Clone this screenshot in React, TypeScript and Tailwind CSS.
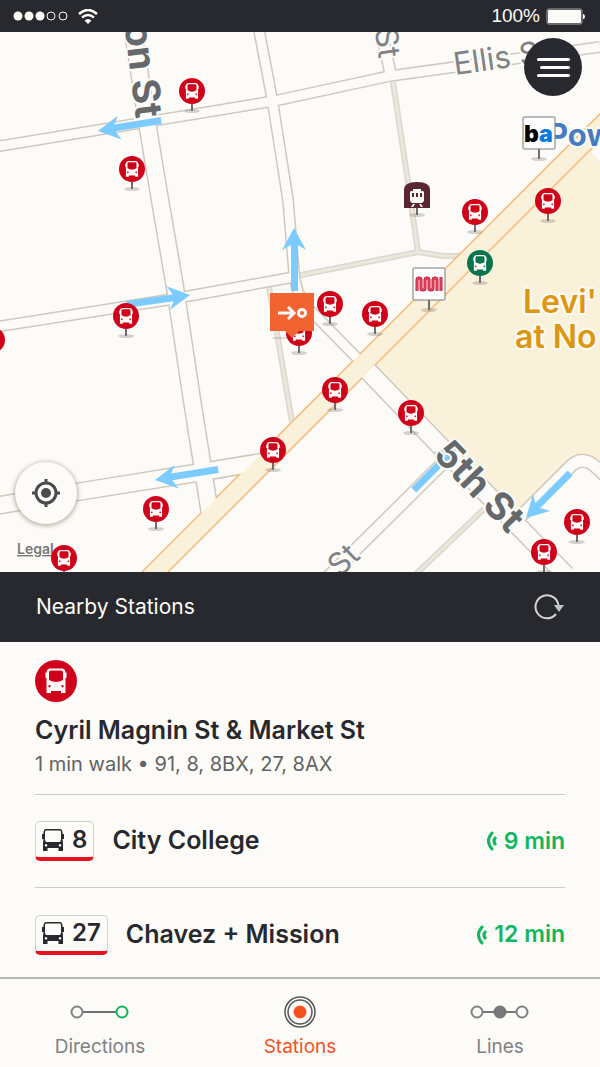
import type { ReactNode } from "react";

type Point = [number, number];

const roads = [
  { d: "M-5 147L0 146L274 101L390 76L600 47", width: 9 },
  { d: "M258 25L272 98L288 200L294 272Q296 295 308 308L357 358", width: 9 },
  { d: "M132 25L148 128L160 200L175 287L192 400L202 463L211 520", width: 16 },
  { d: "M-5 327L167 300L294 277", width: 9 },
  { d: "M380 25L391 76", width: 10 },
  { d: "M-5 506L77 492L202 472L268 461", width: 16 },
  { d: "M368 371L442 448L566 575", width: 17 },
  { d: "M444 462L325 580", width: 11 },
  { d: "M518 519L572 465Q584 455 598 469L612 482", width: 11 },
];

const alleys = [
  "M393 82L408 182L418 252",
  "M296 276L418 252L443 256L462 256",
  "M269 287L277 333L292 422",
  "M484 509L415 575",
];

const marketStreet = "M127 600L640 87";
const muniWorm =
  "M-12 7V-4q0-2 2-2t2 2V4q0 2 2 2t2-2V-4q0-2 2-2t2 2V4q0 2 2 2t2-2V-4q0-2 2-2t2 2V7M12 -7V7";

const arrows: { tip: Point; angle: number; length: number }[] = [
  { tip: [98, 131], angle: -9, length: 64 },
  { tip: [190, 295], angle: 172, length: 64 },
  { tip: [294, 228], angle: 90, length: 63 },
  { tip: [155, 480], angle: -9, length: 64 },
  { tip: [458, 445], angle: 135, length: 63 },
  { tip: [526, 518], angle: -45, length: 63 },
];

const busStops: { at: Point; color?: string }[] = [
  { at: [192, 91] },
  { at: [132, 169] },
  { at: [126, 316] },
  { at: [-8, 340] },
  { at: [475, 212] },
  { at: [548, 201] },
  { at: [480, 263], color: "#08754f" },
  { at: [330, 304] },
  { at: [375, 314] },
  { at: [299, 333] },
  { at: [335, 390] },
  { at: [411, 413] },
  { at: [273, 450] },
  { at: [156, 509] },
  { at: [64, 558] },
  { at: [577, 522] },
  { at: [544, 552] },
];

const departures = [
  { line: "8", destination: "City College", minutes: 9 },
  { line: "27", destination: "Chavez + Mission", minutes: 12 },
];

// Front of a bus, centred on 0,0 and about 21 units wide
function BusShape() {
  return (
    <path
      fillRule="evenodd"
      d="M-5 -12.5H5Q9.500 -12.5 9.500 -8.500H10.500V-3H9.500V12H5V10H-5V12H-9.500V-3H-10.500V-8.500H-9.500Q-9.500 -12.5 -5 -12.5ZM-5 -10.500Q-7 -10.500 -7 -8.500V-1Q0 3 7 -1V-8.500Q7 -10.500 5 -10.500ZM-6.500 4a1.200 1.200 0 1 0 .01 0ZM6.500 4a1.200 1.200 0 1 0 .01 0Z"
    />
  );
}

function Post({ top, base }: { top: number; base: number }) {
  return (
    <>
      <ellipse cx="0" cy={base} rx="8" ry="2" fill="#8b8277" opacity="0.35" />
      <rect x="-1" y={top} width="2" height={base - top} fill="#6b6e72" />
    </>
  );
}

function BusPin({ at, color = "#d0021b" }: { at: Point; color?: string }) {
  return (
    <g transform={`translate(${at[0]} ${at[1]})`}>
      <Post top={12} base={20} />
      <circle r="13" fill={color} />
      <g transform="scale(.64)" fill="#fcfbf7">
        <BusShape />
      </g>
    </g>
  );
}

function SignPin({ at, children }: { at: Point; children: ReactNode }) {
  return (
    <g transform={`translate(${at[0]} ${at[1]})`}>
      <Post top={16} base={26} />
      <rect x="-16" y="-16" width="32" height="32" rx="1" fill="#fefefe" stroke="#777a7e" />
      {children}
    </g>
  );
}

function StreetMap() {
  return (
    <svg
      viewBox="0 32 600 540"
      preserveAspectRatio="xMidYMid slice"
      className="block h-[540px] w-full font-['Inter',sans-serif]"
      role="img"
      aria-label="Map of nearby stops"
    >
      <rect y="32" width="600" height="540" fill="#fcfbf7" />
      <path d="M375 365L524 517L573 465L584 455L600 461V162L591 151Z" fill="#faf1da" />

      <g fill="none">
        {alleys.map((d) => (
          <path key={d} d={d} stroke="#ddd7cd" strokeWidth="6" />
        ))}
        {alleys.map((d) => (
          <path key={d} d={d} stroke="#ebe7de" strokeWidth="3" />
        ))}
        {roads.map((road) => (
          <path key={road.d} d={road.d} stroke="#cfc8be" strokeWidth={road.width + 3} />
        ))}
        <path d={marketStreet} stroke="#f5bd7c" strokeWidth="20" />
        {roads.map((road) => (
          <path key={road.d} d={road.d} stroke="#fcfbf7" strokeWidth={road.width} />
        ))}
        <path d={marketStreet} stroke="#faf1da" strokeWidth="17" />
      </g>

      <g fill="#7bcbff">
        {arrows.map(({ tip, angle, length }) => (
          <path
            key={tip.join()}
            d={`M0 0L22 -12L17 -4H${length}V3H17L22 12Z`}
            transform={`translate(${tip[0]} ${tip[1]}) rotate(${angle})`}
          />
        ))}
      </g>

      <g stroke="#fcfbf7" strokeWidth="4" strokeLinejoin="round" className="[paint-order:stroke]">
        <g fill="#66696c" fontSize="38" fontWeight="700">
          <text textAnchor="end" transform="translate(136 119) rotate(83)">on St</text>
          <text textAnchor="middle" transform="translate(470 495) rotate(46)">5th St</text>
        </g>
        <g fill="#808386" fontSize="31">
          <text textAnchor="end" transform="translate(379 59) rotate(82)">St</text>
          <text transform="translate(455 75) rotate(-8)">Ellis St</text>
          <text transform="translate(340 578) rotate(-44)">St</text>
        </g>
        <g fill="#dd960d" fontSize="32" fontWeight="600">
          <text x="523" y="313">Levi'</text>
          <text x="515" y="348">at No</text>
        </g>
        <text x="548" y="146" fill="#477cc0" fontSize="31" fontWeight="700">Pow</text>
      </g>
      <a href="#legal">
        <text x="17" y="554" fontSize="14" fontWeight="600" fill="#77797b" textDecoration="underline">
          Legal
        </text>
      </a>

      {busStops.map((stop) => (
        <BusPin key={stop.at.join()} {...stop} />
      ))}

      <SignPin at={[539, 133]}>
        <text x="-15" y="9" fontSize="23" fontWeight="900" fill="#050505">
          b<tspan fill="#0a79d8">a</tspan>
        </text>
      </SignPin>
      <SignPin at={[429, 284]}>
        <g fill="none" strokeLinejoin="round">
          <path d={muniWorm} stroke="#cf1536" strokeWidth="3" />
          <path d={muniWorm} stroke="#e8637a" strokeWidth="1" />
        </g>
      </SignPin>

      <g transform="translate(417 196)">
        <Post top={12} base={19} />
        <path d="M-13 12V-6Q-13 -14 0 -14T13 -6V12Z" fill="#582635" />
        <path
          fillRule="evenodd"
          fill="#fcfbf7"
          d="M-4 -7H4V-5H6L7 -4V5L5 7H-5L-7 5V-4L-6 -5H-4ZM-5 -3V1H-3V-3ZM-1 -3V1H1V-3ZM3 -3V1H5V-3ZM-4 8H-2L-4 11H-6ZM4 8H2L4 11H6Z"
        />
      </g>

      <g transform="translate(292 312)">
        <ellipse cx="-12" cy="26" rx="8" ry="1" fill="#8b8277" opacity="0.3" />
        <path d="M-22 -19H22V19H7L0 26L-7 19H-22Z" fill="#f16432" />
        <path d="M-14 1H1M-4 -5L2 1L-4 7" fill="none" stroke="#fcfbf7" strokeWidth="3" />
        <circle cx="10" cy="1" r="3.500" fill="none" stroke="#fcfbf7" strokeWidth="3" />
      </g>
    </svg>
  );
}

function StatusBar() {
  return (
    <header className="flex h-8 items-center justify-between bg-[#28292e] pr-3.5 pl-3 text-[#fcfbf7]">
      <div className="flex items-center gap-2.5">
        <svg width="56" height="10" viewBox="0 0 56 10" fill="currentColor" aria-label="Signal">
          <circle cx="6" cy="5" r="4.500" />
          <circle cx="17" cy="5" r="4.500" />
          <circle cx="28" cy="5" r="4.500" />
          <g fill="none" stroke="currentColor">
            <circle cx="39" cy="5" r="4" />
            <circle cx="51" cy="5" r="4" />
          </g>
        </svg>
        <svg width="20" height="15" viewBox="0 0 20 15" fill="none" stroke="currentColor" strokeWidth="2.500" aria-label="Wi-Fi">
          <path d="M1 5Q10 -3 19 5" />
          <path d="M4 8.500Q10 3.500 16 8.500" />
          <path d="M6.500 11.500Q10 8.500 13.500 11.500L10 15Z" fill="currentColor" stroke="none" />
        </svg>
      </div>
      <div className="flex items-center gap-1.5">
        <span className="font-['Liberation_Sans',sans-serif] text-[19px] leading-8">100%</span>
        <svg width="40" height="17" viewBox="0 0 40 17" aria-label="Battery">
          <rect x="1" y="1" width="35" height="15" rx="2" fill="none" stroke="#a9aaab" />
          <rect x="2" y="2" width="33" height="13" rx="1" fill="currentColor" />
          <path d="M37 6Q39 6 39 8.500T37 11Z" fill="currentColor" />
        </svg>
      </div>
    </header>
  );
}

function LineBadge({ line }: { line: string }) {
  return (
    <span className="flex h-10 items-center gap-2 rounded-[5px] border border-b-4 border-[#cfcfcd] border-b-[#e5121f] px-1.5 text-2xl font-semibold">
      <svg width="22" height="24" viewBox="-11 -12 22 24" fill="#28292e" aria-hidden="true">
        <path
          fillRule="evenodd"
          d="M-7 -11H7Q9 -11 9.500 -8V-6H11V-1H9.500L10 3V11H5.500V8H-5.500V11H-10V3L-9.500 -1H-11V-6H-9.500V-8Q-9 -11 -7 -11ZM-7 -9.500Q-8 -9.500 -8 -8V0L-7 2H7L8 0V-8Q8 -9.500 7 -9.500ZM-7 4a1.300 1.300 0 1 0 .01 0ZM7 4a1.300 1.300 0 1 0 .01 0Z"
        />
      </svg>
      {line}
    </span>
  );
}

function LiveIcon() {
  return (
    <svg width="12" height="20" viewBox="0 0 12 20" fill="none" stroke="currentColor" strokeWidth="3" strokeLinecap="round" aria-hidden="true">
      <path d="M6 2Q-1 10 6 18" />
      <path d="M10 6Q6 10 10 14" strokeLinecap="butt" />
    </svg>
  );
}

function TabButton({ label, active = false, children }: { label: string; active?: boolean; children: ReactNode }) {
  return (
    <button
      type="button"
      aria-current={active ? "page" : undefined}
      className={`flex flex-col items-center gap-1 pt-4 text-[19px] leading-7 ${active ? "text-[#f4511e]" : "text-[#808184]"}`}
    >
      <svg width="60" height="34" viewBox="-30 -17 60 34" fill="none" strokeWidth="2" aria-hidden="true">
        {children}
      </svg>
      {label}
    </button>
  );
}

export default function App() {
  return (
    <div className="w-full bg-[#fcfbf7] font-['Inter',sans-serif] text-[#28292e]">
      <StatusBar />

      <section className="relative overflow-hidden">
        <StreetMap />
        <button
          type="button"
          aria-label="Menu"
          className="absolute top-1.5 right-[18px] flex size-[58px] flex-col items-end justify-center gap-[5px] rounded-full bg-[#28292e] pr-3"
        >
          <span className="h-[3px] w-[33px] rounded bg-[#fcfbf7]" />
          <span className="h-[3px] w-[30px] rounded bg-[#fcfbf7]" />
          <span className="h-[3px] w-[33px] rounded bg-[#fcfbf7]" />
        </button>
        <button
          type="button"
          aria-label="Show my location"
          className="absolute bottom-12 left-[15px] flex size-[62px] items-center justify-center rounded-full bg-[#fcfbf7] shadow-[0_1px_4px_1px_rgba(120,105,80,0.5)]"
        >
          <svg width="30" height="30" viewBox="-15 -15 30 30" fill="none" stroke="#4a4b4f" strokeWidth="3">
            <circle r="10" />
            <circle r="5" fill="#4a4b4f" stroke="none" />
            <path d="M0 -14V-9M0 9V14M-14 0H-9M9 0H14" />
          </svg>
        </button>
      </section>

      <div className="flex h-[70px] items-center justify-between bg-[#28292e] px-9 text-[#fcfbf7]">
        <h2 className="text-[21px]">Nearby Stations</h2>
        <button type="button" aria-label="Refresh">
          <svg width="30" height="28" viewBox="0 0 30 28" fill="none" aria-hidden="true">
            <path d="M24.500 13A11.500 11.500 0 1 0 22 21" stroke="#d3d4d3" strokeWidth="2" />
            <path d="M20 12H30L25 19Z" fill="#bfc5c8" />
          </svg>
        </button>
      </div>

      <main className="px-[35px]">
        <div className="border-b border-[#cbcbc8] pt-[18px] pb-4">
          <svg width="42" height="42" viewBox="-21 -21 42 42" aria-hidden="true">
            <circle r="21" fill="#d0021b" />
            <g fill="#fcfbf7">
              <BusShape />
            </g>
          </svg>
          <h1 className="mt-3 text-[25px] leading-8 font-semibold">Cyril Magnin St &amp; Market St</h1>
          <p className="mt-1 text-xl leading-7 text-[#626366]">1 min walk • 91, 8, 8BX, 27, 8AX</p>
        </div>
        <ul>
          {departures.map(({ line, destination, minutes }) => (
            <li
              key={line}
              className="flex h-[93px] items-center border-b border-[#cbcbc8] last:border-b-0"
            >
              <LineBadge line={line} />
              <span className="ml-[18px] text-[25px] font-semibold">{destination}</span>
              <span className="ml-auto flex items-center gap-1.5 text-[23px] font-semibold text-[#12b65f]">
                <LiveIcon />
                {minutes} min
              </span>
            </li>
          ))}
        </ul>
      </main>

      <nav className="-mt-1 grid h-[90px] grid-cols-3 border-t-2 border-[#b5b5b3]">
        <TabButton label="Directions">
          <path d="M-17 0H17" stroke="#707174" />
          <circle cx="-23" r="5.500" stroke="#808184" />
          <circle cx="22" r="5.500" stroke="#12b65f" />
        </TabButton>
        <TabButton label="Stations" active>
          <circle r="15" stroke="#55565a" strokeWidth="1.500" />
          <circle r="12" stroke="#55565a" strokeWidth="1.500" />
          <circle r="6.500" fill="#f4511e" />
        </TabButton>
        <TabButton label="Lines">
          <path d="M-17 0H17" stroke="#77787b" />
          <circle cx="-23" r="5.500" stroke="#808184" />
          <circle r="6.500" fill="#77787b" />
          <circle cx="22" r="5.500" stroke="#808184" />
        </TabButton>
      </nav>
    </div>
  );
}
